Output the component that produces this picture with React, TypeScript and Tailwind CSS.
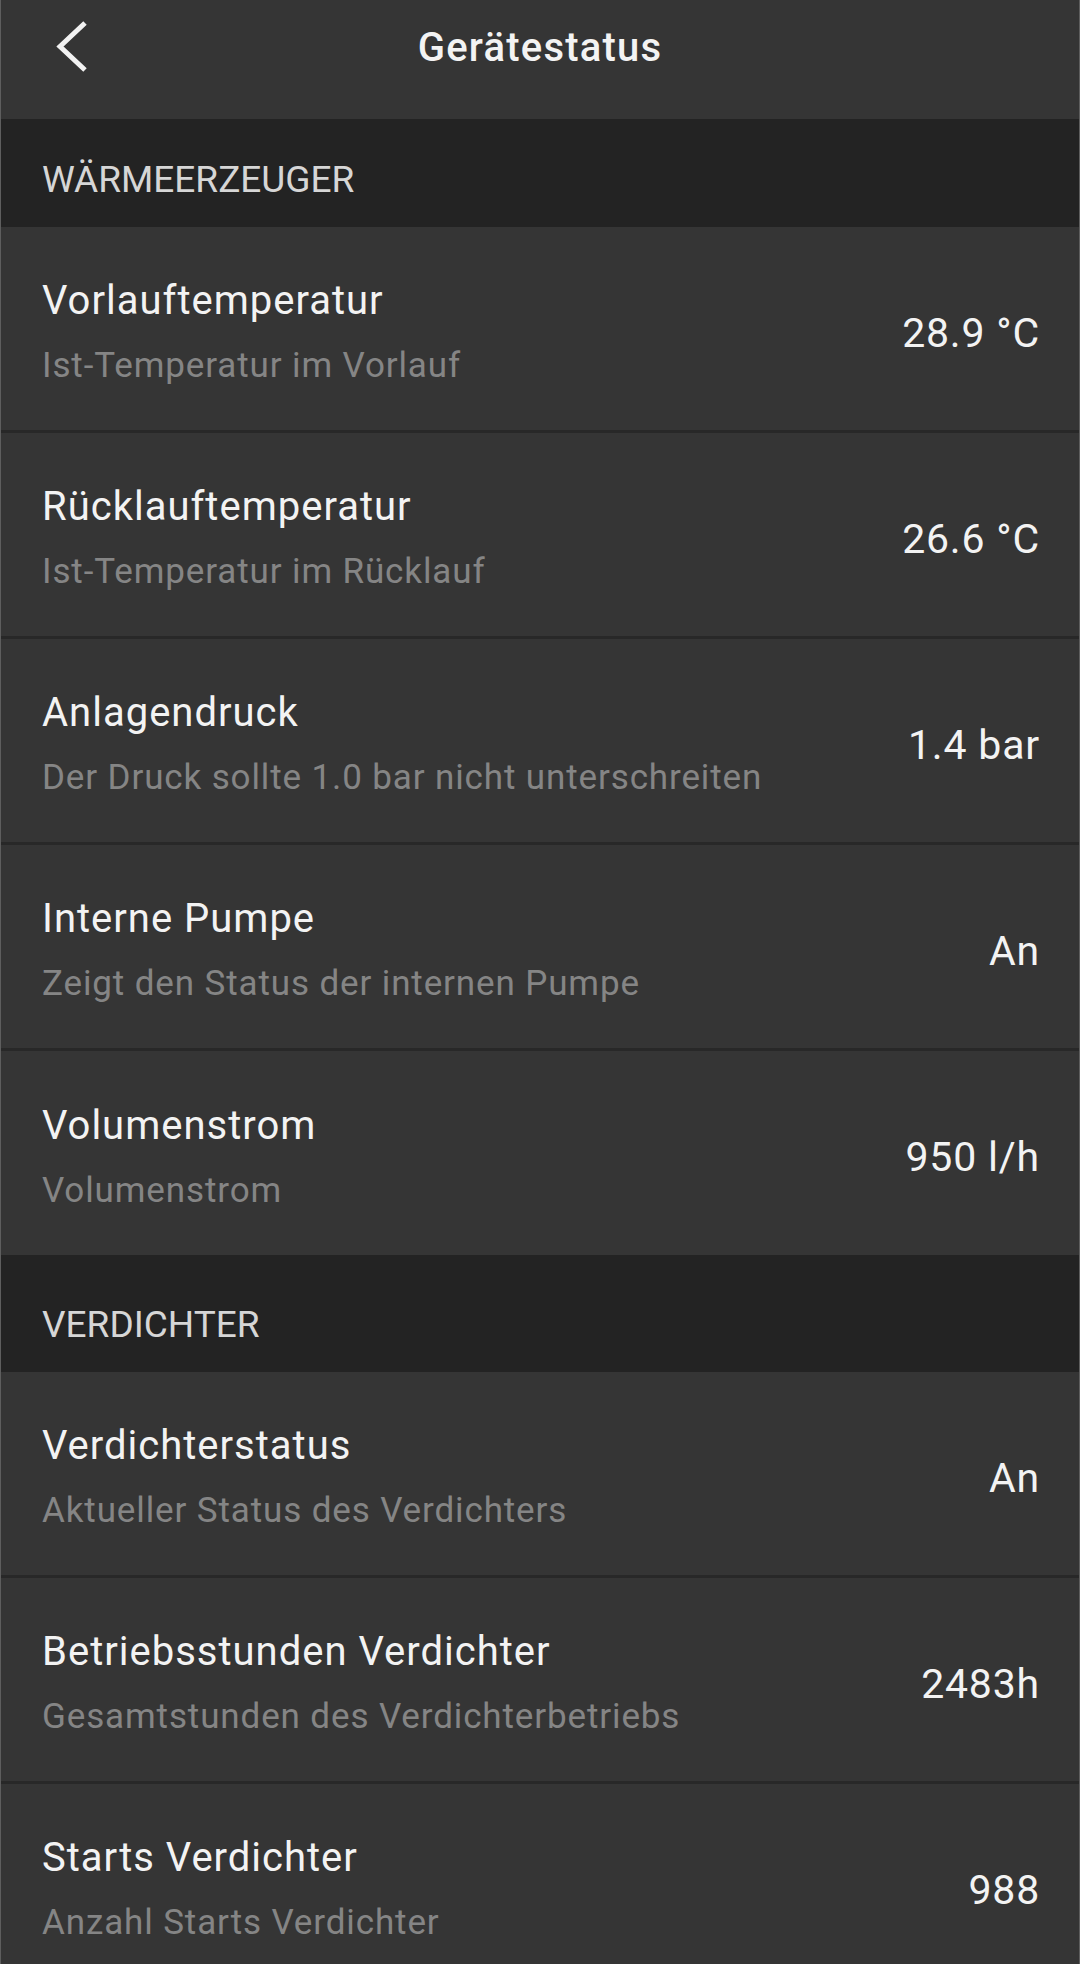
type Item = {
  title: string;
  subtitle: string;
  value: string;
};

const heatItems: Item[] = [
  { title: "Vorlauftemperatur", subtitle: "Ist-Temperatur im Vorlauf", value: "28.9 °C" },
  { title: "Rücklauftemperatur", subtitle: "Ist-Temperatur im Rücklauf", value: "26.6 °C" },
  { title: "Anlagendruck", subtitle: "Der Druck sollte 1.0 bar nicht unterschreiten", value: "1.4 bar" },
  { title: "Interne Pumpe", subtitle: "Zeigt den Status der internen Pumpe", value: "An" },
  { title: "Volumenstrom", subtitle: "Volumenstrom", value: "950 l/h" },
];

const compressorItems: Item[] = [
  { title: "Verdichterstatus", subtitle: "Aktueller Status des Verdichters", value: "An" },
  { title: "Betriebsstunden Verdichter", subtitle: "Gesamtstunden des Verdichterbetriebs", value: "2483h" },
  { title: "Starts Verdichter", subtitle: "Anzahl Starts Verdichter", value: "988" },
];

function StatusRow({ item, last }: { item: Item; last?: boolean }) {
  return (
    <div
      className={
        last
          ? "flex h-[204px] items-center justify-between bg-[#353535] pl-[41px] pr-[39px]"
          : "flex h-[206px] items-center justify-between border-b-[3px] border-[#282828] bg-[#353535] pl-[41px] pr-[39px]"
      }
    >
      <div className="flex flex-col pt-[6px]">
        <span className="text-[40px] leading-[47px] tracking-[0.025em] text-[#f3f3f3]">{item.title}</span>
        <span className="mt-[21px] text-[35px] leading-[41px] tracking-[0.025em] text-[#858585]">
          {item.subtitle}
        </span>
      </div>
      <span className="pt-[8px] text-[41px] leading-[48px] tracking-[0.02em] text-[#f3f3f3]">{item.value}</span>
    </div>
  );
}

export default function App() {
  return (
    <div className="h-screen overflow-hidden border-x border-[#5e5e5e] bg-[#353535] font-['Roboto','Noto_Sans',sans-serif]">
      <header className="h-[119px] bg-[#353535]">
        <div className="grid h-[94px] grid-cols-[1fr_auto_1fr] items-center">
          <div className="pl-[51px]">
            <svg width="40" height="60" viewBox="0 0 40 60" fill="none" aria-hidden="true">
              <path d="M33 6 L8 29.5 L33 53" stroke="#f2f2f2" strokeWidth={5} />
            </svg>
          </div>
          <h1 className="text-[40px] font-medium leading-[47px] tracking-[0.03em] text-[#f3f3f3]">Gerätestatus</h1>
          <div />
        </div>
      </header>

      <div className="h-[108px] bg-[#232323] px-[41px] pt-[39px] text-[37px] leading-[44px] text-[#d6d6d6]">
        WÄRMEERZEUGER
      </div>
      {heatItems.map((item, i) => (
        <StatusRow key={item.title} item={item} last={i === heatItems.length - 1} />
      ))}

      <div className="h-[117px] bg-[#232323] px-[41px] pt-[48px] text-[37px] leading-[44px] text-[#d6d6d6]">
        VERDICHTER
      </div>
      {compressorItems.map((item) => (
        <StatusRow key={item.title} item={item} />
      ))}
    </div>
  );
}
